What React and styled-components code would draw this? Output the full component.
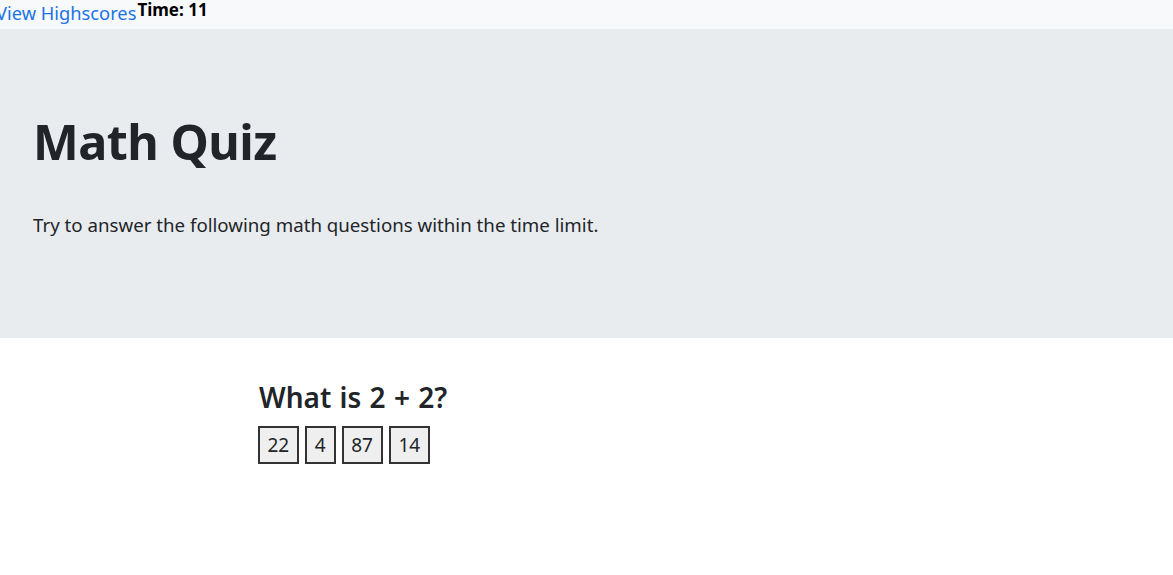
import styled, { createGlobalStyle } from "styled-components"

const GlobalStyle = createGlobalStyle`
  body {
    margin: 0;
    background: #fff;
    font-family: "Noto Sans", "Open Sans", sans-serif;
    color: #212529;
  }
`

const choices = ['22', '4', '87', '14']

const App = () => {
  return (
    <>
      <GlobalStyle />
      <NavBar>
        <HighscoreLink href="#">View Highscores</HighscoreLink>
        <Timer>Time: 11</Timer>
      </NavBar>
      <Jumbotron>
        <Title>Math Quiz</Title>
        <Lead>Try to answer the following math questions within the time limit.</Lead>
      </Jumbotron>
      <QuizContainer>
        <Question>What is 2 + 2?</Question>
        <ChoiceRow>
          {choices.map((choice) => (
            <ChoiceButton key={choice}>{choice}</ChoiceButton>
          ))}
        </ChoiceRow>
      </QuizContainer>
    </>
  )
}

const NavBar = styled.nav`
  display: flex;
  align-items: flex-start;
  height: 29px;
  background-color: #f8f9fa;
`

const HighscoreLink = styled.a`
  margin-left: -4px;
  font-size: 18.3px;
  line-height: 25px;
  color: #1a73e8;
  text-decoration: none;
`

const Timer = styled.div`
  margin-left: 1px;
  font-size: 17px;
  font-weight: 700;
  line-height: 19px;
  color: #000;
`

const Jumbotron = styled.header`
  background-color: #e9ecef;
  height: 309px;
  box-sizing: border-box;
  padding: 82px 33px 0;
`

const Title = styled.h1`
  margin: 0;
  font-size: 48.5px;
  font-weight: 700;
  line-height: 60px;
  letter-spacing: -0.5px;
`

const Lead = styled.p`
  margin: 42px 0 0;
  font-size: 18.7px;
  font-weight: 400;
  line-height: 24px;
`

const QuizContainer = styled.main`
  padding: 40px 0 0 258px;
`

const Question = styled.h3`
  margin: 0 0 10px 1px;
  font-size: 28px;
  font-weight: 600;
  line-height: 38px;
  word-spacing: 1px;
`

const ChoiceRow = styled.div`
  display: flex;
  gap: 6px;
`

const ChoiceButton = styled.button`
  font-family: inherit;
  font-size: 19px;
  color: #212529;
  background-color: #efefef;
  border: 2px solid #333;
  height: 38px;
  padding: 0 8px 0 7.5px;
  cursor: pointer;
`

export default App
